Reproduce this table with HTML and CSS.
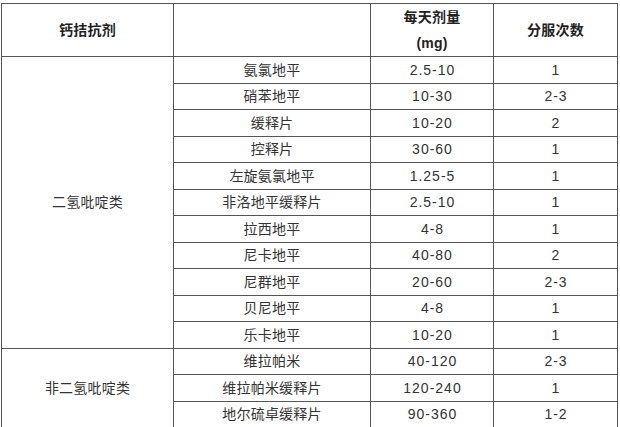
FILE: index.html
```html
<!DOCTYPE html>
<html lang="zh">
<head>
<meta charset="utf-8">
<link rel="stylesheet" href="styles.css">
</head>
<body>
<table class="drug-table">
  <colgroup>
    <col class="c1"><col class="c2"><col class="c3"><col class="c4">
  </colgroup>
  <thead>
    <tr class="head">
      <th>钙拮抗剂</th>
      <th></th>
      <th><div class="two">每天剂量<br>(mg)</div></th>
      <th>分服次数</th>
    </tr>
  </thead>
  <tbody>
    <tr><td rowspan="11">二氢吡啶类</td><td>氨氯地平</td><td>2.5-10</td><td>1</td></tr>
    <tr><td>硝苯地平</td><td>10-30</td><td>2-3</td></tr>
    <tr><td>缓释片</td><td>10-20</td><td>2</td></tr>
    <tr><td>控释片</td><td>30-60</td><td>1</td></tr>
    <tr><td>左旋氨氯地平</td><td>1.25-5</td><td>1</td></tr>
    <tr><td>非洛地平缓释片</td><td>2.5-10</td><td>1</td></tr>
    <tr><td>拉西地平</td><td>4-8</td><td>1</td></tr>
    <tr><td>尼卡地平</td><td>40-80</td><td>2</td></tr>
    <tr><td>尼群地平</td><td>20-60</td><td>2-3</td></tr>
    <tr><td>贝尼地平</td><td>4-8</td><td>1</td></tr>
    <tr><td>乐卡地平</td><td>10-20</td><td>1</td></tr>
    <tr><td rowspan="3">非二氢吡啶类</td><td>维拉帕米</td><td>40-120</td><td>2-3</td></tr>
    <tr><td>维拉帕米缓释片</td><td>120-240</td><td>1</td></tr>
    <tr><td>地尔硫卓缓释片</td><td>90-360</td><td>1-2</td></tr>
  </tbody>
</table>
</body>
</html>
```
FILE: styles.css
```css
html, body {
  margin: 0;
  padding: 0;
  background: #fff;
}
body {
  padding: 3px 0 0 1px;
  font-family: "Liberation Sans", "Noto Sans CJK SC", sans-serif;
  font-size: 14px;
  color: #333;
}
.drug-table {
  border-collapse: collapse;
  table-layout: fixed;
  width: 617px;
}
.c1 { width: 172px; }
.c2 { width: 197px; }
.c3 { width: 123px; }
.c4 { width: 124px; }
.drug-table th,
.drug-table td {
  border: 1px solid #555;
  text-align: center;
  vertical-align: middle;
  padding: 0;
  line-height: 20px;
  letter-spacing: 0.2px;
}
.drug-table tbody td:nth-last-child(-n+2) {
  letter-spacing: 1px;
  text-indent: 1px;
}
.drug-table th {
  font-weight: bold;
  color: #222;
}
.head { height: 52px; }
.two { line-height: 26px; }
.drug-table tbody tr { height: 26.5px; }
```
